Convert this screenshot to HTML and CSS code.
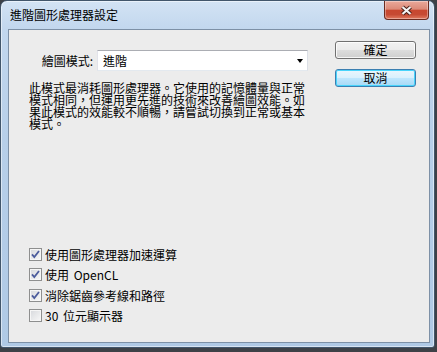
FILE: index.html
```html
<!DOCTYPE html>
<html lang="zh-Hant">
<head>
<meta charset="utf-8">
<title>進階圖形處理器設定</title>
<link rel="stylesheet" href="styles.css">
</head>
<body>
<div class="window">
  <div class="titlebar">
    <span class="title">進階圖形處理器設定</span>
    <button class="close" aria-label="關閉">
      <svg width="13" height="11" viewBox="0 0 13 11"><path d="M2.5 2 L10.5 9 M10.5 2 L2.5 9" stroke="#4a2019" stroke-width="4.2" fill="none"/><path d="M2.5 2 L10.5 9 M10.5 2 L2.5 9" stroke="#f4f4f4" stroke-width="2.2" fill="none"/></svg>
    </button>
  </div>
  <div class="frame">
    <div class="client">
      <div class="main">
        <div class="mode-row">
          <label class="mode-label">繪圖模式:</label>
          <div class="select"><span>進階</span><span class="arrow"></span></div>
        </div>
        <p class="desc">此模式最消耗圖形處理器。它使用的記憶體量與正常模式相同，但運用更先進的技術來改善繪圖效能。如果此模式的效能較不順暢，請嘗試切換到正常或基本模式。</p>
        <ul class="checks">
          <li class="check"><span class="box"><svg width="9" height="9" viewBox="0 0 9 9"><path d="M1 4.3 L3.3 7 L8 1" stroke="#4b5b9c" stroke-width="1.8" fill="none"/></svg></span>使用圖形處理器加速運算</li>
          <li class="check"><span class="box"><svg width="9" height="9" viewBox="0 0 9 9"><path d="M1 4.3 L3.3 7 L8 1" stroke="#4b5b9c" stroke-width="1.8" fill="none"/></svg></span>使用 <span class="latin">OpenCL</span></li>
          <li class="check"><span class="box"><svg width="9" height="9" viewBox="0 0 9 9"><path d="M1 4.3 L3.3 7 L8 1" stroke="#4b5b9c" stroke-width="1.8" fill="none"/></svg></span>消除鋸齒參考線和路徑</li>
          <li class="check"><span class="box"></span><span class="num">30</span> 位元顯示器</li>
        </ul>
      </div>
      <div class="side">
        <button class="btn">確定</button>
        <button class="btn default">取消</button>
      </div>
    </div>
  </div>
</div>
</body>
</html>
```

FILE: styles.css
```css
* { box-sizing: border-box; }
html, body { margin: 0; padding: 0; }
body {
  width: 437px;
  height: 352px;
  overflow: hidden;
  background: #3d4147;
  font-family: "Noto Sans CJK TC", "Noto Sans", sans-serif;
  font-size: 12px;
  color: #000;
}
.window {
  width: 435px;
  height: 348px;
  display: flex;
  flex-direction: column;
  border: 1px solid #42566b;
  border-radius: 7px 7px 3px 3px;
  background: linear-gradient(180deg, #d3e3f4 0%, #c2d7ee 8%, #b7cfe9 40%, #afc9e5 100%);
  box-shadow: inset 0 0 0 1px rgba(255,255,255,.5);
}
.titlebar {
  flex: none;
  height: 28px;
  display: flex;
  justify-content: space-between;
  align-items: flex-start;
  padding-left: 9px;
}
.title { line-height: 28px; }
.close {
  width: 45px;
  height: 19px;
  margin-right: 5px;
  padding: 0;
  border: 1px solid #6a2b20;
  border-top: none;
  border-radius: 0 0 4px 4px;
  background: linear-gradient(180deg, #eaa99b 0%, #dc8a78 45%, #c8472f 52%, #c64a33 75%, #e17a60 100%);
  box-shadow: inset 0 0 0 1px rgba(255,255,255,.35);
  display: flex;
  align-items: center;
  justify-content: center;
}
.close svg { display: block; }
.frame {
  flex: 1;
  display: flex;
  padding: 0 4px 4px 7px;
}
.client {
  flex: 1;
  display: flex;
  background: #ececec;
  border: 1px solid #7d90a6;
}
.main {
  flex: 1;
  display: flex;
  flex-direction: column;
  padding: 20px 0 16px 20px;
}
.mode-row {
  display: flex;
  align-items: center;
  height: 21px;
}
.mode-label {
  width: 64px;
  margin-right: 4px;
  text-align: right;
}
.select {
  width: 211px;
  height: 21px;
  display: flex;
  align-items: center;
  justify-content: space-between;
  padding: 0 4px 0 5px;
  background: #fff;
  border: 1px solid;
  border-color: #abadb3 #dbdfe6 #e3e9ef #e2e3ea;
}
.arrow {
  width: 0;
  height: 0;
  border-left: 3.5px solid transparent;
  border-right: 3.5px solid transparent;
  border-top: 4px solid #000;
}
.desc {
  margin: 11px 0 0;
  width: 280px;
  line-height: 12px;
}
.checks {
  margin: auto 0 0;
  padding: 0;
  list-style: none;
}
.check {
  height: 20.5px;
  display: flex;
  align-items: center;
  white-space: pre;
}
.box {
  width: 13px;
  height: 13px;
  margin-right: 3px;
  border: 1px solid #8e8f8f;
  background: linear-gradient(135deg, #d6d8dc 0%, #f8f8f8 100%);
  box-shadow: inset 0 0 0 1px #f6f6f6;
  display: flex;
  align-items: center;
  justify-content: center;
}
.box svg { display: block; }
.latin { margin-left: 2px; }
.num { margin-right: 2px; }
.side {
  width: 94px;
  display: flex;
  flex-direction: column;
  gap: 10px;
  padding: 11px 13px 0 0;
}
.btn {
  width: 81px;
  height: 18px;
  padding: 0;
  font: inherit;
  line-height: 16px;
  color: #000;
  border: 1px solid #707070;
  border-radius: 3px;
  background: linear-gradient(180deg, #f2f2f2 0%, #ebebeb 49%, #dddddd 51%, #cfcfcf 100%);
  box-shadow: inset 0 0 0 1px rgba(255,255,255,.8);
}
.btn.default {
  border-color: #3c7fb1;
  background: linear-gradient(180deg, #eaf6fd 0%, #d9f0fc 49%, #bee6fd 51%, #a7d9f5 100%);
  box-shadow: inset 0 0 0 1px #48d4fb;
}
```
